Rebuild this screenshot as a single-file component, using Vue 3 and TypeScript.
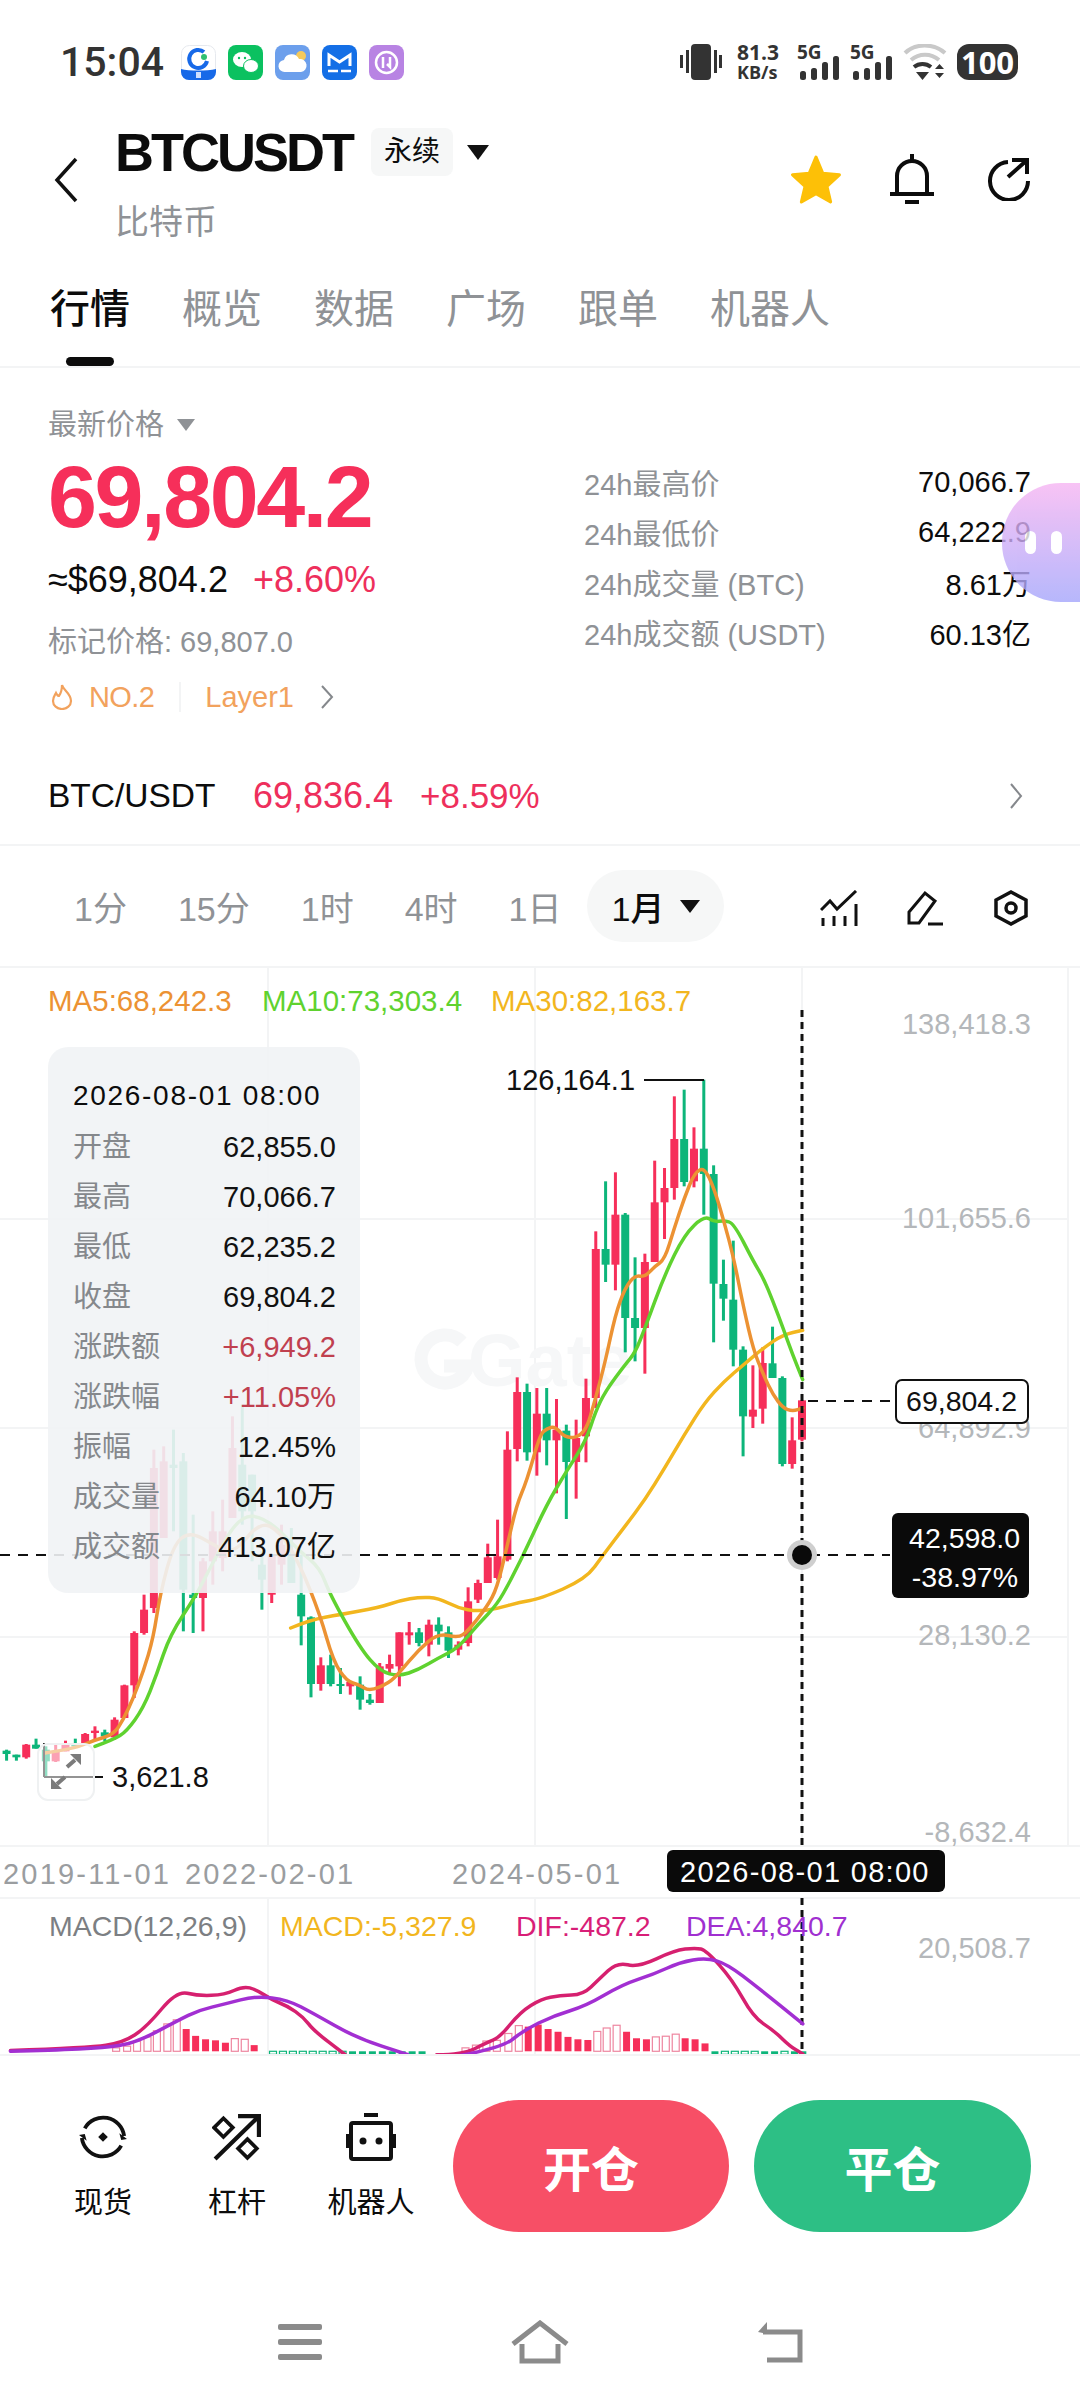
<template>
  <div class="page">
    <!-- status bar -->
    <div class="status">
      <span class="time">15:04</span>
      <div class="apps">
        <svg class="app" viewBox="0 0 35 35">
          <rect x=".5" y=".5" width="34" height="34" rx="8" fill="#fff" stroke="#e6e9ee" />
          <path d="M0 24c8 2 26 2 35 0v3a8 8 0 0 1-8 8H8a8 8 0 0 1-8-8z" fill="#1769e8" />
          <path d="M23 7a9 9 0 1 0 3 9" fill="none" stroke="#1769e8" stroke-width="4" />
          <circle cx="23" cy="12" r="3" fill="#2fbf71" />
          <rect x="15" y="27" width="5" height="6" fill="#cfe0ff" />
        </svg>
        <svg class="app" viewBox="0 0 35 35">
          <rect width="35" height="35" rx="8" fill="#0bc160" />
          <ellipse cx="14" cy="14.500" rx="9" ry="7.500" fill="#fff" />
          <ellipse cx="23" cy="21" rx="7.500" ry="6.500" fill="#fff" stroke="#0bc160" />
          <circle cx="11" cy="13" r="1.200" fill="#0bc160" />
          <circle cx="17" cy="13" r="1.200" fill="#0bc160" />
        </svg>
        <svg class="app" viewBox="0 0 35 35">
          <rect width="35" height="35" rx="8" fill="#6c9fec" />
          <circle cx="26" cy="11" r="5" fill="#f4c95a" />
          <path d="M10 27a6 6 0 0 1-1-12 8 8 0 0 1 15-1 6.500 6.500 0 0 1 2 13z" fill="#fff" />
        </svg>
        <svg class="app" viewBox="0 0 35 35">
          <rect width="35" height="35" rx="8" fill="#146fe6" />
          <path d="M7 21V10l10.500 7L28 10v11" fill="none" stroke="#fff" stroke-width="3" />
          <path d="M6 26h10M19 26h10" stroke="#fff" stroke-width="2.500" />
        </svg>
        <svg class="app" viewBox="0 0 35 35">
          <rect width="35" height="35" rx="8" fill="#b883e3" />
          <circle cx="17.500" cy="17.500" r="10.500" fill="none" stroke="#fff" stroke-width="2.500" />
          <path d="M14 12v11M21 12v10l-3-3" fill="none" stroke="#fff" stroke-width="2.500" />
        </svg>
      </div>
      <div class="sys">
        <svg class="vib" viewBox="0 0 44 36" fill="#333">
          <rect x="13" y="0" width="20" height="36" rx="4" />
          <rect x="2" y="11" width="3" height="13" />
          <rect x="8" y="6" width="3" height="23" />
          <rect x="36" y="6" width="3" height="23" />
          <rect x="41" y="11" width="3" height="13" />
        </svg>
        <div class="speed"><b>81.3</b><b class="unit">KB/s</b></div>
        <div v-for="n in 2" :key="n" class="sig">
          <b>5G</b>
          <svg viewBox="0 0 40 24" fill="#333">
            <rect x="1" y="15" width="6" height="9" rx="2.500" />
            <rect x="12" y="12" width="6" height="12" rx="2.500" />
            <rect x="23" y="6" width="6" height="18" rx="2.500" />
            <rect x="34" y="0" width="6" height="24" rx="2.500" />
          </svg>
        </div>
        <svg class="wifi" viewBox="0 0 44 36">
          <path d="M2 9C12-1 31-1 42 9" fill="none" stroke="#c9c9c9" stroke-width="4" />
          <path d="M8 16c8-7 20-7 28 0" fill="none" stroke="#c9c9c9" stroke-width="4" />
          <path d="M11 23c5-4 12-4 17 0" fill="none" stroke="#333" stroke-width="4" />
          <path d="M13 28h13l-6.500 8z" fill="#333" />
          <path d="M32 25l4.500-5 4.500 5zM32 29h9l-4.500 5z" fill="#333" />
        </svg>
        <div class="battery">100</div>
      </div>
    </div>

    <!-- title -->
    <div class="head">
      <svg class="back" viewBox="0 0 24 46"><path d="M22 2L3 23l19 21" fill="none" stroke="#111" stroke-width="3.500" /></svg>
      <div class="title-col">
        <div class="title-row">
          <span class="symbol">BTCUSDT</span>
          <span class="perp">永续</span>
          <span class="tri"></span>
        </div>
        <div class="sub">比特币</div>
      </div>
      <div class="head-icons">
        <svg class="i-star" viewBox="0 0 50 48"><path d="M25 3l6.500 15.500 16 1.500-12 11 3.500 15L25 38 11 46l3.500-15-12-11 16-1.500z" fill="#fdc007" stroke="#fdc007" stroke-width="3" stroke-linejoin="round" /></svg>
        <svg class="i-bell" viewBox="0 0 44 50" fill="none" stroke="#0c0c0c" stroke-width="4">
          <path d="M7 39V22a15 15 0 0 1 30 0v17" />
          <path d="M0 40h44" />
          <path d="M22 0v7" />
          <path d="M15 48h14" />
        </svg>
        <svg class="i-share" viewBox="0 0 46 44" fill="none" stroke="#0c0c0c" stroke-width="4">
          <path d="M24 5A19 19 0 1 0 44 24" />
          <path d="M24 20L42 4M28 3h15v14" />
        </svg>
      </div>
    </div>

    <!-- tabs -->
    <div class="tabs">
      <span v-for="(t, i) in tabs" :key="t" class="tab" :class="{ on: i === 0 }">{{ t }}</span>
      <i class="tab-bar"></i>
    </div>

    <!-- price -->
    <div class="price-wrap">
      <div class="left">
        <div class="latest">最新价格<i class="tri-gray"></i></div>
        <div class="big">69,804.2</div>
        <div class="usd"><span>≈$69,804.2</span><span class="red">+8.60%</span></div>
        <div class="mark">标记价格: 69,807.0</div>
        <div class="tags">
          <svg class="flame" viewBox="0 0 22 26"><path d="M11 1c1 5 9 8 9 16a9 8 0 0 1-18 0c0-4 2-6 3-8 1 2 2 3 3 3 2-3 3-7 3-11z" fill="none" stroke="#f2a25d" stroke-width="2.200" /></svg>
          <span class="no">NO.2</span>
          <i class="tag-sep"></i>
          <span>Layer1</span>
          <svg class="chev" viewBox="0 0 14 26"><path d="M2 2l10 11L2 24" fill="none" stroke="#85888c" stroke-width="2" /></svg>
        </div>
      </div>
      <div class="right">
        <div v-for="r in stats" :key="r[0]" class="stat"><span>{{ r[0] }}</span><b>{{ r[1] }}</b></div>
      </div>
      <div class="blob"><i></i><i></i></div>
    </div>

    <div class="pair">
      <span class="pair-name">BTC/USDT</span>
      <span class="red pair-num">69,836.4</span>
      <span class="red">+8.59%</span>
      <svg class="chev2" viewBox="0 0 14 28"><path d="M2 2l10 12L2 26" fill="none" stroke="#85888c" stroke-width="2" /></svg>
    </div>

    <!-- periods -->
    <div class="periods">
      <span v-for="p in periods" :key="p" class="period">{{ p }}</span>
      <span class="pill">1月<i class="tri"></i></span>
      <div class="tools">
        <svg viewBox="0 0 38 36" fill="none" stroke="#111" stroke-width="3">
          <path d="M1 20l9-9 7 8L36 1" />
          <path d="M3 28v8M14 26v10M25 26v10M36 14v22" />
        </svg>
        <svg viewBox="0 0 38 36" fill="none" stroke="#111" stroke-width="3">
          <path d="M3 33V22L19 3l10 8-16 22z" />
          <path d="M22 34h15" />
        </svg>
        <svg viewBox="0 0 38 36" fill="none" stroke="#111" stroke-width="3.500">
          <path d="M19 2l15 8v16l-15 8-15-8V10z" />
          <circle cx="19" cy="18" r="5" />
        </svg>
      </div>
    </div>

    <!-- chart -->
    <div class="chart">
      <svg class="plot" viewBox="0 970 1080 1086" width="1080" height="1086">
        <g stroke="#f3f4f5" stroke-width="2">
          <path d="M0 1221H1068M0 1430H1068M0 1639H1068M0 1848H1080M0 1900H1080" />
          <path d="M268 970V1848M535 970V1848M802 970V1848M1068 970V1848M268 1900V2056M535 1900V2056" />
        </g>

        <!-- watermark -->
        <path d="M462 1344a24 24 0 1 0 6 24h-24" fill="none" stroke="#f6f7f8" stroke-width="13" />
        <text x="468" y="1388" class="mark-text">Gate</text>

        <g v-for="c in candles" :key="c.x" :fill="c.color">
          <rect :x="c.x - 1.500" :y="c.wt" width="3" :height="c.wb - c.wt" />
          <rect :x="c.x - 4" :y="c.bt" width="8" :height="Math.max(c.bb - c.bt, 2)" />
        </g>

        <path :d="ma30" class="ma" stroke="#f2b61e" />
        <path :d="ma10" class="ma" stroke="#5fd22f" />
        <path :d="ma5" class="ma" stroke="#ec9233" />

        <!-- high / low marks -->
        <path d="M644 1082H704M44 1779H103M44 1745V1779" stroke="#111" stroke-width="2" fill="none" />
        <text x="506" y="1092" class="t-dark">126,164.1</text>
        <text x="112" y="1789" class="t-dark">3,621.8</text>

        <rect x="38" y="1746" width="56" height="56" rx="10" fill="#fff" fill-opacity=".55" stroke="#eff1f2" stroke-width="2" />
        <path d="M70 1756h11v11zM62 1791H51v-11z" fill="#7b7b7b" />
        <path d="M75 1762l-8 7M57 1786l8-7" stroke="#7b7b7b" stroke-width="4" />

        <!-- legend -->
        <text x="48" y="1013" class="t-leg" fill="#ec9233">MA5:68,242.3</text>
        <text x="262" y="1013" class="t-leg" fill="#5fd22f">MA10:73,303.4</text>
        <text x="491" y="1013" class="t-leg" fill="#f2b61e">MA30:82,163.7</text>

        <!-- y axis -->
        <text v-for="l in yLabels" :key="l[0]" x="1031" :y="l[1]" class="t-axis">{{ l[0] }}</text>

        <!-- crosshair -->
        <path d="M802 1012V1848M802 1900V2056" stroke="#111" stroke-width="3" stroke-dasharray="7 5" />
        <path d="M0 1557H890M808 1403H890" stroke="#111" stroke-width="2" stroke-dasharray="10 8" />
        <circle cx="802" cy="1557" r="15" fill="#cfcfcf" />
        <circle cx="802" cy="1557" r="10" fill="#0a0a0a" />

        <rect x="896" y="1382" width="132" height="43" rx="6" fill="#fff" stroke="#111" stroke-width="2" />
        <text x="1017" y="1413" class="t-tag" fill="#111">69,804.2</text>
        <rect x="892" y="1515" width="137" height="85" rx="6" fill="#0a0a0a" />
        <text x="1020" y="1550" class="t-tag" fill="#fff">42,598.0</text>
        <text x="1018" y="1589" class="t-tag" fill="#fff">-38.97%</text>

        <!-- x axis -->
        <text x="3" y="1886" class="t-date">2019-11-01</text>
        <text x="185" y="1886" class="t-date">2022-02-01</text>
        <text x="452" y="1886" class="t-date">2024-05-01</text>
        <rect x="667" y="1852" width="278" height="42" rx="6" fill="#0a0a0a" />
        <text x="680" y="1884" class="t-date-on">2026-08-01 08:00</text>

        <!-- macd -->
        <text x="49" y="1938" class="t-macd" fill="#7c7f83">MACD(12,26,9)</text>
        <text x="280" y="1938" class="t-macd" fill="#f2b61e">MACD:-5,327.9</text>
        <text x="516" y="1938" class="t-macd" fill="#d81e77">DIF:-487.2</text>
        <text x="686" y="1938" class="t-macd" fill="#a030d0">DEA:4,840.7</text>
        <text x="1031" y="1960" class="t-axis">20,508.7</text>

        <g v-for="b in bars" :key="b.x">
          <rect
            :x="b.x - 3.500"
            :y="b.top"
            width="7"
            :height="b.h"
            :fill="b.hollow ? '#fff' : b.color"
            :stroke="b.hollow ? b.color : 'none'"
            stroke-width="1.200"
          />
        </g>
        <path :d="dif1" class="macd" stroke="#d6206f" />
        <path :d="dif2" class="macd" stroke="#d6206f" />
        <path :d="dea1" class="macd dea" stroke="#a22fd2" />
        <path :d="dea2" class="macd dea" stroke="#a22fd2" />
      </svg>

      <div class="tip">
        <div class="tip-date">2026-08-01 08:00</div>
        <div v-for="r in tipRows" :key="r[0]" class="tip-row">
          <span>{{ r[0] }}</span>
          <b :class="{ loss: r[1].startsWith('+') }">{{ r[1] }}</b>
        </div>
      </div>
    </div>

    <!-- trade bar -->
    <div class="bar">
      <div class="bar-item">
        <svg viewBox="0 0 50 50" fill="none" stroke="#111" stroke-width="4">
          <path d="M6 16A22 22 0 0 1 47 24" />
          <path d="M44 34A22 22 0 0 1 3 26" />
          <path d="M0 23l6-1 2 7zM50 27l-6 1-2-7z" fill="#111" stroke="none" />
          <path d="M25 20l5 5-5 5-5-5z" fill="#111" stroke="none" />
        </svg>
        <span>现货</span>
      </div>
      <div class="bar-item">
        <svg viewBox="0 0 46 46" fill="none" stroke="#111" stroke-width="4">
          <path d="M2 44L42 5M24 3h20v20" />
          <path d="M10 5l9 9-9 9-9-9zM33 25l9 9-9 9-9-9z" stroke-width="3.500" />
        </svg>
        <span>杠杆</span>
      </div>
      <div class="bar-item">
        <svg viewBox="0 0 50 48" fill="none" stroke="#111" stroke-width="4">
          <path d="M18 2h14" />
          <rect x="5" y="10" width="40" height="36" rx="2" />
          <path d="M2 21v14M48 21v14" />
          <circle cx="17" cy="28" r="3.500" fill="#111" stroke="none" />
          <circle cx="33" cy="28" r="3.500" fill="#111" stroke="none" />
        </svg>
        <span>机器人</span>
      </div>
      <button class="btn open">开仓</button>
      <button class="btn close">平仓</button>
    </div>

    <!-- nav -->
    <div class="nav">
      <svg viewBox="0 0 44 36" width="44" height="36" fill="#8b8b8b">
        <rect y="0" width="44" height="6" rx="2" />
        <rect y="15" width="44" height="6" rx="2" />
        <rect y="30" width="44" height="6" rx="2" />
      </svg>
      <svg viewBox="0 0 58 44" width="58" height="44" fill="none" stroke="#8b8b8b" stroke-width="5">
        <path d="M2 24L29 3l27 21" />
        <path d="M11 24v17h36V24" />
      </svg>
      <svg viewBox="0 0 46 42" width="46" height="42" fill="none" stroke="#8b8b8b" stroke-width="5">
        <path d="M6 11h37v28H10" />
        <path d="M10 1L1 11l9 2z" fill="#8b8b8b" stroke="none" />
      </svg>
    </div>
  </div>
</template>

<script setup lang="ts">
type Row = [number, number, number, number, string]

const tabs = ['行情', '概览', '数据', '广场', '跟单', '机器人']
const periods = ['1分', '15分', '1时', '4时', '1日']
const stats = [
  ['24h最高价', '70,066.7'],
  ['24h最低价', '64,222.9'],
  ['24h成交量 (BTC)', '8.61万'],
  ['24h成交额 (USDT)', '60.13亿'],
]
const tipRows = [
  ['开盘', '62,855.0'],
  ['最高', '70,066.7'],
  ['最低', '62,235.2'],
  ['收盘', '69,804.2'],
  ['涨跌额', '+6,949.2'],
  ['涨跌幅', '+11.05%'],
  ['振幅', '12.45%'],
  ['成交量', '64.10万'],
  ['成交额', '413.07亿'],
]
const yLabels: [string, number][] = [
  ['138,418.3', 1036],
  ['101,655.6', 1230],
  ['64,892.9', 1440],
  ['28,130.2', 1647],
  ['-8,632.4', 1844],
]

// candle values are read top to bottom from the right side of the chart
const upper: Row[] = [
  [1027, 1027, 1145, 1150, 'r'], [1078, 1147, 1218, 1232, 'r'], [955, 960, 1218, 1225, 'g'],
  [806, 916, 960, 960, 'g'], [868, 915, 1052, 1097, 'r'], [922, 1055, 1076, 1110, 'r'],
  [865, 875, 1075, 1195, 'g'], [548, 725, 875, 925, 'g'], [605, 678, 722, 788, 'g'],
  [322, 348, 677, 853, 'g'], [65, 272, 348, 470, 'g'], [208, 272, 370, 388, 'r'],
  [95, 243, 372, 385, 'g'], [115, 243, 390, 425, 'r'], [330, 390, 433, 543, 'r'],
  [308, 433, 612, 612, 'r'], [587, 612, 810, 947, 'r'], [598, 780, 810, 910, 'g'],
  [465, 470, 780, 883, 'g'], [343, 470, 620, 697, 'r'], [370, 573, 620, 672, 'g'],
  [520, 573, 1020, 1050, 'r'], [962, 1020, 1135, 1213, 'r'], [1085, 1140, 1212, 1322, 'r'],
  [1100, 1118, 1212, 1383, 'g'], [1023, 1115, 1147, 1306, 'r'], [990, 1067, 1147, 1222, 'g'],
  [990, 1067, 1183, 1253, 'r'], [977, 1002, 1183, 1208, 'g'], [958, 1002, 1173, 1210, 'r'],
]
const lower: Row[] = [
  [100, 155, 485, 490, 'r'], [365, 475, 540, 545, 'r'], [437, 478, 555, 555, 'r'],
  [545, 555, 605, 615, 'r'], [568, 610, 735, 745, 'r'], [730, 740, 755, 772, 'r'],
  [685, 703, 758, 780, 'g'], [658, 680, 700, 740, 'g'], [665, 680, 740, 775, 'r'],
  [690, 703, 735, 745, 'g'], [672, 703, 712, 740, 'r'], [703, 703, 805, 865, 'r'],
  [770, 798, 812, 825, 'r'], [795, 805, 915, 915, 'r'], [888, 905, 915, 920, 'g'],
  [835, 860, 905, 935, 'g'], [850, 852, 865, 890, 'r'], [810, 858, 862, 888, 'g'],
  [770, 802, 858, 865, 'g'], [778, 802, 858, 878, 'r'], [655, 658, 858, 898, 'g'],
  [470, 590, 655, 742, 'g'], [390, 470, 555, 555, 'g'], [380, 440, 500, 560, 'r'],
  [470, 470, 590, 615, 'r'], [460, 500, 545, 635, 'g'], [230, 230, 340, 490, 'g'],
  [20, 200, 340, 380, 'g'], [55, 150, 360, 360, 'r'], [305, 400, 480, 520, 'r'],
  [340, 400, 490, 560, 'r'], [480, 490, 600, 700, 'r'], [350, 590, 600, 705, 'g'],
  [165, 190, 575, 700, 'g'], [95, 200, 210, 400, 'g'], [145, 190, 420, 420, 'r'],
  [155, 210, 630, 645, 'r'], [590, 635, 705, 710, 'r'], [700, 705, 862, 900, 'r'],
  [860, 862, 960, 960, 'r'], [958, 965, 1018, 1025, 'r'], [995, 1003, 1015, 1030, 'g'],
  [985, 998, 1005, 1025, 'r'], [1005, 1008, 1035, 1035, 'r'], [1022, 1035, 1045, 1048, 'g'],
  [1028, 1035, 1060, 1060, 'r'], [1040, 1060, 1090, 1092, 'r'], [1045, 1055, 1090, 1135, 'g'],
  [1022, 1040, 1052, 1052, 'g'], [1038, 1040, 1078, 1082, 'r'], [1070, 1070, 1078, 1088, 'g'],
  [1055, 1058, 1068, 1088, 'g'],
]

const RED = '#f62f5a'
const GREEN = '#0db57a'

const candles = [...upper.map((r) => [r, 1060]), ...lower.map((r) => [r, 1400])].map((item, k) => {
  const [r, base] = item as [Row, number]
  const y = (v: number) => base + v / 3
  return {
    x: 802 - 9.82 * k,
    wt: y(r[0]),
    bt: y(r[1]),
    bb: y(r[2]),
    wb: y(r[3]),
    color: r[4] === 'r' ? RED : GREEN,
  }
})

const smooth = (pts: number[][]) => {
  let d = `M${pts[0][0]} ${pts[0][1]}`
  for (let i = 1; i < pts.length - 1; i++) {
    const mx = (pts[i][0] + pts[i + 1][0]) / 2
    const my = (pts[i][1] + pts[i + 1][1]) / 2
    d += `Q${pts[i][0]} ${pts[i][1]} ${mx} ${my}`
  }
  const last = pts[pts.length - 1]
  return d + `L${last[0]} ${last[1]}`
}
const left = (p: number[][]) => p.map(([x, y]) => [x / 3, 1400 + y / 3])
const rightPts = (p: number[][]) => p.map(([x, y]) => [490 + x / 3, 1060 + y / 3])

const ma5 = smooth([
  ...left([
    [135, 1065], [222, 1052], [281, 1027], [340, 1010], [370, 965], [400, 900], [430, 820], [460, 720],
    [480, 590], [520, 440], [570, 400], [640, 440], [700, 470], [780, 370], [840, 400], [900, 500],
    [960, 650], [1000, 790], [1040, 850], [1078, 860], [1108, 880], [1167, 855], [1197, 825], [1256, 755],
    [1315, 705], [1374, 720], [1403, 700], [1462, 625], [1491, 570],
  ]),
  ...rightPts([
    [50, 1470], [80, 1340], [110, 1270], [150, 1130], [170, 1112], [195, 1105], [229, 1143], [285, 1130],
    [317, 1020], [346, 910], [376, 770], [405, 690], [435, 652], [465, 657], [494, 625], [524, 605],
    [553, 510], [583, 420], [613, 345], [643, 328], [672, 390], [702, 490], [731, 600], [761, 750],
    [790, 875], [820, 950], [849, 1010], [879, 1050], [908, 1060], [938, 1050],
  ]),
])
const ma10 = smooth([
  ...left([
    [285, 1045], [340, 1025], [380, 1000], [430, 930], [470, 830], [510, 710], [590, 590], [640, 490],
    [720, 350], [800, 360], [900, 460], [960, 510], [990, 590], [1080, 750], [1140, 820], [1197, 835],
    [1256, 815], [1315, 780], [1374, 750], [1433, 680], [1491, 620], [1530, 550],
  ]),
  ...rightPts([
    [75, 1540], [110, 1470], [170, 1340], [229, 1240], [287, 1150], [317, 1060], [346, 1000], [405, 920],
    [435, 885], [465, 810], [524, 650], [583, 530], [643, 473], [672, 492], [702, 488], [731, 495],
    [790, 610], [820, 660], [849, 730], [879, 810], [908, 890], [938, 965],
  ]),
])
const ma30 = smooth([
  ...left([
    [872, 690], [931, 665], [1020, 650], [1138, 628], [1200, 608], [1260, 597], [1315, 600], [1374, 630],
    [1433, 640], [1491, 632], [1560, 612],
  ]),
  [540, 1601],
  [586, 1581],
  ...rightPts([
    [340, 1490], [405, 1405], [465, 1325], [524, 1230], [583, 1130], [643, 1035], [702, 970], [761, 920],
    [820, 870], [879, 830], [938, 817],
  ]),
])

// macd pane, values measured on a 1.912 x 2.92 crop
const pane = (p: number[][]) => p.map(([x, y]) => [x / 1.912, 1930 + y / 2.92])
const dif1 = smooth(pane([
  [20, 358], [170, 350], [235, 335], [280, 290], [338, 183], [378, 198], [430, 195], [465, 170], [490, 180],
  [520, 210], [550, 228], [580, 260], [600, 300], [660, 370],
]))
const dif2 = smooth(pane([
  [835, 370], [885, 370], [930, 335], [955, 320], [995, 245], [1035, 207], [1070, 197], [1115, 195], [1145, 150],
  [1180, 100], [1220, 115], [1290, 65], [1330, 58], [1350, 65], [1400, 150], [1440, 260], [1480, 300], [1510, 345],
  [1535, 368],
]))
const dea1 = smooth(pane([
  [20, 360], [100, 357], [200, 350], [260, 335], [340, 270], [380, 240], [430, 222], [490, 198], [550, 210],
  [600, 250], [680, 320], [780, 370],
]))
const dea2 = smooth(pane([
  [880, 372], [960, 350], [1000, 300], [1060, 255], [1120, 228], [1190, 165], [1250, 135], [1300, 100], [1350, 87],
  [1390, 105], [1450, 175], [1535, 280],
]))

const posBars: [number, number, boolean][] = [
  [222, 350, true], [243, 345, true], [262, 330, true], [282, 318, true], [300, 300, true], [320, 280, true],
  [338, 268, true], [356, 295, false], [374, 315, false], [393, 325, false], [412, 328, false], [431, 335, false],
  [449, 323, true], [468, 325, true], [486, 342, false],
  [890, 350, true], [910, 342, true], [930, 330, true], [950, 328, true], [972, 308, true], [992, 285, true],
  [1010, 288, false], [1029, 282, false], [1048, 295, false], [1067, 303, false], [1086, 318, false],
  [1105, 325, false], [1124, 327, false], [1142, 302, true], [1160, 292, true], [1179, 284, true],
  [1198, 303, false], [1217, 322, false], [1236, 325, false], [1254, 318, true], [1273, 316, true], [1292, 310, true],
  [1310, 322, false], [1329, 325, false], [1348, 337, false],
]
const negBars: [number, boolean][] = [
  [522, true], [541, true], [560, true], [579, true], [598, true], [617, true], [636, true], [655, true],
  [674, false], [693, false], [712, false], [731, false], [750, false], [769, false], [788, false], [807, false],
  [1367, false], [1386, true], [1405, true], [1424, true], [1443, true], [1462, false], [1481, false], [1500, true],
  [1519, false], [1535, false],
]
const BASE = 1930 + 360 / 2.92
const bars = [
  ...posBars.map(([x, top, hollow]) => {
    const t = 1930 + top / 2.92
    return { x: x / 1.912, top: t, h: BASE - t, hollow, color: hollow ? '#ee86a0' : RED }
  }),
  ...negBars.map(([x, hollow]) => ({ x: x / 1.912, top: BASE, h: 3, hollow, color: GREEN })),
]
</script>

<style>
html,
body {
  margin: 0;
  background: #fff;
}
</style>

<style scoped>
.page {
  width: 1080px;
  height: 2408px;
  overflow: hidden;
  position: relative;
  background: #fff;
  color: #0c0c0c;
  font-family: 'Liberation Sans', 'Noto Sans CJK SC', sans-serif;
}
i {
  font-style: normal;
}
b {
  font-weight: 400;
}

.status {
  height: 124px;
  display: flex;
  align-items: center;
  padding: 0 62px 0 60px;
  box-sizing: border-box;
}
.time {
  font: 500 41px Roboto, sans-serif;
  color: #333;
  width: 121px;
}
.apps {
  display: flex;
  gap: 12px;
}
.app {
  width: 35px;
  height: 35px;
}
.sys {
  margin-left: auto;
  display: flex;
  align-items: center;
  color: #333;
  font-family: 'Open Sans', sans-serif;
}
.vib {
  width: 44px;
  height: 36px;
  margin-right: 15px;
}
.speed {
  display: flex;
  flex-direction: column;
  width: 45px;
  margin-right: 15px;
  font-size: 21px;
  line-height: 19px;
  font-weight: 700;
  white-space: nowrap;
}
.speed b,
.sig b {
  font-weight: 700;
}
.speed .unit {
  font-size: 18px;
  margin-top: 1px;
}
.sig {
  width: 43px;
  height: 36px;
  margin-right: 10px;
  position: relative;
  font-size: 19px;
  line-height: 16px;
}
.sig svg {
  position: absolute;
  left: 2px;
  bottom: 0;
  width: 40px;
  height: 24px;
}
.wifi {
  width: 44px;
  height: 36px;
  margin-right: 10px;
}
.battery {
  width: 61px;
  height: 36px;
  border-radius: 12px;
  background: #333;
  color: #fff;
  font: 700 31px/36px 'Open Sans', sans-serif;
  text-align: center;
}

.head {
  height: 131px;
  display: flex;
  position: relative;
}
.back {
  width: 24px;
  height: 46px;
  margin: 33px 37px 0 54px;
}
.title-row {
  display: flex;
  align-items: center;
  height: 56px;
}
.symbol {
  font-size: 54px;
  letter-spacing: -3px;
  font-weight: 700;
  line-height: 56px;
}
.perp {
  margin-left: 19px;
  width: 82px;
  height: 48px;
  background: #f6f7f7;
  border-radius: 8px;
  font-size: 28px;
  line-height: 48px;
  text-align: center;
}
.tri {
  display: inline-block;
  width: 0;
  height: 0;
  margin-left: 14px;
  border-left: 11px solid transparent;
  border-right: 11px solid transparent;
  border-top: 15px solid #111;
}
.sub {
  margin-top: 22px;
  font-size: 34px;
  line-height: 40px;
  color: #8f9296;
}
.head-icons {
  position: absolute;
  left: 790px;
  top: 30px;
  display: flex;
  align-items: center;
  height: 50px;
}
.i-star {
  width: 52px;
  height: 50px;
  margin-right: 48px;
}
.i-bell {
  width: 44px;
  height: 50px;
  margin-right: 50px;
}
.i-share {
  width: 46px;
  height: 44px;
}

.tabs {
  height: 113px;
  box-sizing: border-box;
  border-bottom: 2px solid #f3f4f5;
  padding: 26px 0 0 50px;
  display: flex;
  gap: 52px;
  position: relative;
}
.tab {
  font-size: 40px;
  line-height: 56px;
  color: #8f9296;
}
.tab.on {
  color: #0c0c0c;
  font-weight: 500;
}
.tab-bar {
  position: absolute;
  left: 66px;
  bottom: 0;
  width: 48px;
  height: 9px;
  border-radius: 5px;
  background: #0c0c0c;
}

.price-wrap {
  height: 404px;
  display: flex;
  position: relative;
}
.left {
  width: 584px;
  padding: 37px 0 0 48px;
  box-sizing: border-box;
}
.latest {
  display: flex;
  align-items: center;
  font-size: 29px;
  line-height: 40px;
  color: #8f9296;
}
.tri-gray {
  margin-left: 13px;
  border-left: 9px solid transparent;
  border-right: 9px solid transparent;
  border-top: 12px solid #8f9296;
}
.big {
  margin-top: 7px;
  font-size: 88px;
  letter-spacing: -2.400px;
  line-height: 90px;
  font-weight: 700;
  color: #f62f5a;
}
.usd {
  margin-top: 16px;
  display: flex;
  gap: 25px;
  font-size: 36px;
  line-height: 44px;
}
.red {
  color: #ee2f5c;
}
.mark {
  margin-top: 20px;
  font-size: 29px;
  line-height: 40px;
  color: #8f9296;
}
.tags {
  margin-top: 15px;
  display: flex;
  align-items: center;
  font-size: 29px;
  line-height: 40px;
  color: #f2a25d;
}
.flame {
  width: 22px;
  height: 26px;
  margin: 0 16px 0 3px;
}
.no {
  letter-spacing: -0.600px;
}
.tag-sep {
  width: 2px;
  height: 30px;
  background: #f3f4f5;
  margin: 0 24px 0 25px;
}
.chev {
  width: 14px;
  height: 26px;
  margin-left: 26px;
}
.right {
  width: 447px;
  padding-top: 89px;
}
.stat {
  height: 50px;
  display: flex;
  align-items: center;
  justify-content: space-between;
  font-size: 29px;
  color: #8f9296;
}
.stat b {
  color: #0c0c0c;
}
.blob {
  position: absolute;
  right: 0;
  top: 115px;
  width: 78px;
  height: 119px;
  border-radius: 59px 0 0 59px;
  background: linear-gradient(180deg, #f6b4f2, #a5a6fc);
  opacity: 0.8;
  display: flex;
  align-items: center;
  gap: 15px;
  padding-left: 23px;
  box-sizing: border-box;
}
.blob i {
  width: 11px;
  height: 23px;
  border-radius: 6px;
  background: #fff;
}

.pair {
  height: 74px;
  box-sizing: border-box;
  border-bottom: 2px solid #f3f4f5;
  padding: 0 57px 24px 48px;
  display: flex;
  align-items: center;
  font-size: 35px;
}
.pair-name {
  font-size: 33.500px;
  width: 205px;
}
.pair-num {
  font-size: 36px;
  width: 167px;
}
.chev2 {
  width: 14px;
  height: 28px;
  margin-left: auto;
}

.periods {
  height: 122px;
  box-sizing: border-box;
  border-bottom: 2px solid #f3f4f5;
  padding-left: 74px;
  display: flex;
  align-items: center;
  gap: 51px;
  font-size: 34px;
  color: #8f9296;
}
.pill {
  margin-left: -26px;
  width: 137px;
  height: 72px;
  box-sizing: border-box;
  padding-left: 25px;
  border-radius: 36px;
  background: #f6f7f7;
  color: #0c0c0c;
  display: flex;
  align-items: center;
  font-weight: 500;
}
.pill .tri {
  border-left-width: 10px;
  border-right-width: 10px;
  border-top-width: 13px;
  margin-left: 16px;
}
.tools {
  display: flex;
  gap: 48px;
  margin: 3px 0 0 45px;
}
.tools svg {
  width: 38px;
  height: 36px;
}

.chart {
  height: 1086px;
  position: relative;
}
.plot {
  display: block;
}
.plot text {
  font-family: 'Liberation Sans', 'Noto Sans CJK SC', sans-serif;
}
.ma,
.macd {
  fill: none;
  stroke-width: 3.500;
  stroke-linejoin: round;
  stroke-linecap: round;
}
.macd.dea {
  stroke-width: 3.500;
}
.mark-text {
  font-size: 74px;
  font-weight: 700;
  fill: #f6f7f8;
}
.t-dark {
  font-size: 29px;
  fill: #111;
}
.t-leg {
  font-size: 29.500px;
}
.t-axis {
  font-size: 29px;
  fill: #b4b7ba;
  text-anchor: end;
}
.t-tag {
  font-size: 28.500px;
  text-anchor: end;
}
.t-date {
  font-size: 29px;
  letter-spacing: 2.200px;
  fill: #9a9da0;
}
.t-date-on {
  font-size: 29px;
  letter-spacing: 1.300px;
  fill: #fff;
}
.t-macd {
  font-size: 28.500px;
}
.tip {
  position: absolute;
  left: 48px;
  top: 79px;
  width: 312px;
  height: 546px;
  box-sizing: border-box;
  padding: 31px 24px 0 25px;
  border-radius: 20px;
  background: rgba(241, 243, 245, 0.9);
}
.tip-date {
  font-size: 28px;
  line-height: 36px;
  letter-spacing: 1.700px;
  margin-bottom: 15px;
}
.tip-row {
  display: flex;
  justify-content: space-between;
  height: 50px;
  line-height: 36px;
  font-size: 29px;
  color: #85888c;
}
.tip-row b {
  color: #111;
}
.tip-row b.loss {
  color: #c0404f;
}

.bar {
  height: 178px;
  border-top: 2px solid #f3f4f5;
  box-sizing: border-box;
  padding: 44px 0 0 36px;
  display: flex;
  align-items: flex-start;
}
.bar-item {
  width: 134px;
  display: flex;
  flex-direction: column;
  align-items: center;
  padding-top: 13px;
  font-size: 29px;
  line-height: 36px;
}
.bar-item svg {
  width: 50px;
  height: 48px;
  margin-bottom: 24px;
}
.btn {
  width: 276px;
  height: 132px;
  border: none;
  border-radius: 66px;
  color: #fff;
  font: 700 48px 'Liberation Sans', 'Noto Sans CJK SC', sans-serif;
}
.btn.open {
  margin-left: 15px;
  background: #f74f66;
}
.btn.close {
  margin-left: 25px;
  width: 277px;
  background: #2dbf85;
}
.nav {
  position: absolute;
  left: 180px;
  top: 2320px;
  width: 720px;
  display: grid;
  grid-template-columns: repeat(3, 240px);
  justify-items: center;
  align-items: center;
}
</style>
